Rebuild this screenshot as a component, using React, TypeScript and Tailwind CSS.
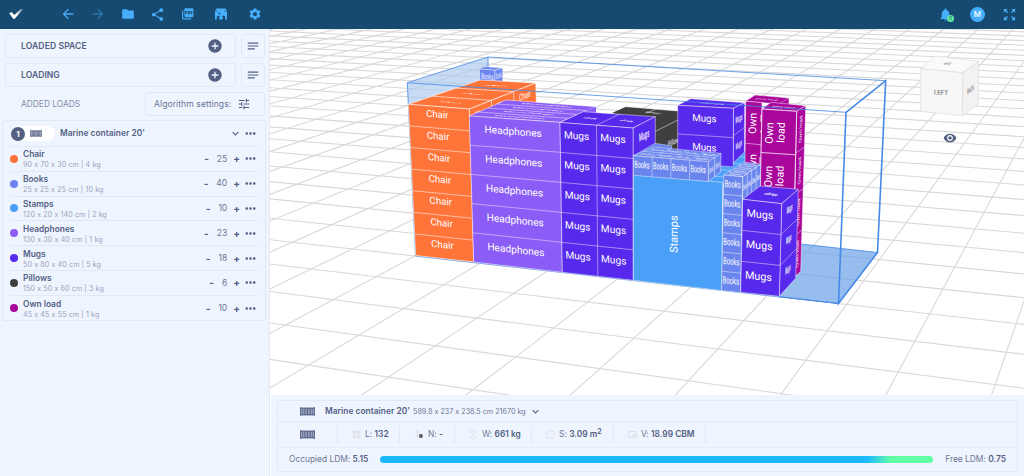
import React from "react";
import {
  MdAddCircle,
  MdArrowBack,
  MdArrowForward,
  MdExpandMore,
  MdFolder,
  MdMoreHoriz,
  MdNotes,
  MdNotifications,
  MdPictureAsPdf,
  MdSettings,
  MdShare,
  MdTune,
  MdVisibility,
  MdZoomOutMap,
} from "react-icons/md";

type Pt = [number, number];
type Quad = [Pt, Pt, Pt, Pt];

const loads = [
  { name: "Chair", dims: "90 x 70 x 30 cm | 4 kg", qty: 25, dot: "bg-[#ff7439]" },
  { name: "Books", dims: "25 x 25 x 25 cm | 10 kg", qty: 40, dot: "bg-[#6a85ee]" },
  { name: "Stamps", dims: "120 x 20 x 140 cm | 2 kg", qty: 10, dot: "bg-[#4a9ff8]" },
  { name: "Headphones", dims: "130 x 30 x 40 cm | 1 kg", qty: 23, dot: "bg-[#8b5df6]" },
  { name: "Mugs", dims: "50 x 80 x 40 cm | 5 kg", qty: 18, dot: "bg-[#5629ec]" },
  { name: "Pillows", dims: "150 x 50 x 60 cm | 3 kg", qty: 6, dot: "bg-[#3f3f3f]" },
  { name: "Own load", dims: "45 x 45 x 55 cm | 1 kg", qty: 10, dot: "bg-[#a9069c]" },
];

const lerp = (a: Pt, b: Pt, t: number): Pt => [a[0] + (b[0] - a[0]) * t, a[1] + (b[1] - a[1]) * t];

/** Point inside a quad (tl, tr, br, bl) at fractions u (across) and v (down). */
const at = (q: Quad, u: number, v: number): Pt => lerp(lerp(q[0], q[1], u), lerp(q[3], q[2], u), v);

const unit = (a: Pt, b: Pt): Pt => {
  const l = Math.hypot(b[0] - a[0], b[1] - a[1]) || 1;
  return [(b[0] - a[0]) / l, (b[1] - a[1]) / l];
};

const pts = (p: Pt[]) => p.map((c) => c.join(",")).join(" ");

type FaceProps = {
  q: Quad;
  fill: string;
  rows?: number;
  cols?: number;
  label?: string;
  fs?: number;
  sx?: number;
  sy?: number;
  turn?: number;
  cu?: number;
  cv?: number;
  line?: number;
  textOpacity?: number;
  weight?: number;
};

function Face({ q, fill, rows = 1, cols = 1, label, fs = 10, sx = 1, sy = 1, turn = 0, cu = 0.5, cv = 0.5, line = 0.6, textOpacity = 1, weight = 400 }: FaceProps) {
  const marks: React.ReactNode[] = [];
  for (let r = 1; r < rows; r++) {
    const a = at(q, 0, r / rows);
    const b = at(q, 1, r / rows);
    marks.push(<line key={`r${r}`} x1={a[0]} y1={a[1]} x2={b[0]} y2={b[1]} />);
  }
  for (let c = 1; c < cols; c++) {
    const a = at(q, c / cols, 0);
    const b = at(q, c / cols, 1);
    marks.push(<line key={`c${c}`} x1={a[0]} y1={a[1]} x2={b[0]} y2={b[1]} />);
  }
  const texts: React.ReactNode[] = [];
  if (label) {
    for (let r = 0; r < rows; r++) {
      for (let c = 0; c < cols; c++) {
        const v = (r + cv) / rows;
        const u = (c + cu) / cols;
        const p = at(q, u, v);
        const ux = unit(at(q, 0, v), at(q, 1, v));
        const vy = unit(at(q, u, 0), at(q, u, 1));
        texts.push(
          <text
            key={`${r}-${c}`}
            transform={`matrix(${ux[0] * sx} ${ux[1] * sx} ${vy[0] * sy} ${vy[1] * sy} ${p[0]} ${p[1]}) rotate(${turn})`}
            fontSize={fs}
            fontWeight={weight}
            y={fs * 0.34}
            textAnchor="middle"
            fill="#fff"
            opacity={textOpacity}
          >
            {label}
          </text>,
        );
      }
    }
  }
  return (
    <g>
      <polygon points={pts(q)} fill={fill} stroke="#fff" strokeOpacity={0.75} strokeWidth={line} strokeLinejoin="round" />
      <g stroke="#fff" strokeOpacity={0.75} strokeWidth={line}>{marks}</g>
      {texts}
    </g>
  );
}

/** Floor projection; one unit is a metre, the origin is the container's near left corner. */
const floor = (X: number, Z: number): Pt => {
  const w = 1 - 0.019 * X + 0.0483 * Z;
  return [(415 + 55.85 * X + 57 * Z) / w, (256 + 2.29 * X - 7.34 * Z) / w];
};

function FloorGrid() {
  const lines: React.ReactNode[] = [];
  for (let X = -40; X <= 20; X++) {
    const a = floor(X, -8);
    const b = floor(X, 60);
    lines.push(<line key={`x${X}`} x1={a[0]} y1={a[1]} x2={b[0]} y2={b[1]} />);
  }
  for (let Z = -8; Z <= 60; Z++) {
    const a = floor(-40, Z);
    const b = floor(20, Z);
    lines.push(<line key={`z${Z}`} x1={a[0]} y1={a[1]} x2={b[0]} y2={b[1]} />);
  }
  return <g stroke="#d8d8d8" strokeWidth={1.1}>{lines}</g>;
}

const CHAIR = "#ff7439";
const BOOK = "#6a85ee";
const STAMP = "#4a9ff8";
const HEAD = "#8b5df6";
const MUG = "#5629ec";
const OWN = "#a9069c";
const EDGE = "#4688e6";

function Scene() {
  return (
    <svg className="block h-[366px] w-[754px]" viewBox="270 29 754 366" fontFamily="Roboto, sans-serif">
      <FloorGrid />
      <polygon points="720,235.5 800.7,244 877.5,252.5 838.5,303.5 740,292" fill="#6ea3e8" fillOpacity={0.72} />
      <polygon points="407.3,82.7 488,57 489,90 408.5,106" fill="#a9c7f0" fillOpacity={0.65} />
      <g stroke={EDGE} strokeWidth={1} fill="none" strokeOpacity={0.8}>
        <path d="M407.3 82.7L488 57L885.7 80.7M488 57V84" />
        <path d="M800.7 244L877.5 252.5M407.3 82.7L415.5 256M415.5 256L838.5 303.5" />
      </g>

      <Face q={[[485, 66.7], [502.7, 68], [495, 70.3], [479.3, 69]]} fill={BOOK} line={0.4} />
      <Face q={[[479.3, 69], [495, 70.3], [495, 86], [480, 84]]} fill={BOOK} label="Books" fs={8} sx={0.55} cv={0.45} />
      <Face q={[[495, 70.3], [502.7, 68], [502.7, 84], [495, 86]]} fill={BOOK} label="Books" fs={8} sx={0.26} cv={0.4} />

      <Face q={[[480, 80], [535.7, 83], [469.3, 109], [408.3, 104.3]]} fill={CHAIR} rows={3} label="Chair" fs={9} sy={0.32} sx={1} turn={180} line={0.8} />
      <Face q={[[469.3, 109], [535.7, 83], [536.5, 106], [470, 133]]} fill={CHAIR} cols={3} label="Chair" fs={9} sx={0.6} line={0.8} cv={0.36} />
      <Face q={[[408.3, 104.3], [469.3, 109], [473.7, 262], [415.7, 255.5]]} fill={CHAIR} rows={7} label="Chair" fs={9.7} cu={0.47} cv={0.36} line={0.7} />

      <Face q={[[506, 100], [596, 106.7], [560, 122.3], [469.3, 116]]} fill={HEAD} rows={4} label="Headphones" fs={9} sy={0.34} turn={180} />
      <polygon points="596,106.7 596,114 583,112" fill={HEAD} />
      <Face q={[[469.3, 116], [560, 122.3], [562.3, 272.3], [473.7, 262]]} fill={HEAD} rows={5} label="Headphones" fs={10.2} cu={0.48} cv={0.42} />

      <polygon points="612,113 626,106.7 678,111 678,160 640,160 640,120" fill="#3f3f3f" />
      <path d="M655 131.5L678 120M646.5 113L656 109.2M626 106.7L678 111" stroke="#fff" strokeOpacity={0.7} strokeWidth={0.7} fill="none" />
      <text transform="matrix(.5 -.22 0 1 668 147)" fontSize={8} fill="#fff">Pillows</text>
      <text transform="matrix(-.6 -.06 .5 -.25 662 113)" fontSize={8} fill="#fff">Pillows</text>

      <Face q={[[755, 95], [788.7, 98], [779, 104], [745.7, 101.3]]} fill={OWN} label="Own load" fs={6} sy={0.45} sx={0.9} turn={180} />
      <polygon points="779,104 788.7,98 788.7,125 779,125" fill={OWN} />
      <Face q={[[771, 102.3], [805.7, 105.7], [796.7, 111.3], [762, 109]]} fill={OWN} label="Own load" fs={6} sy={0.45} sx={0.9} turn={180} />
      <Face q={[[796.7, 111.3], [805.7, 105.7], [800.7, 271.5], [793, 278]]} fill={OWN} rows={4} label="Own load" fs={6.5} sx={0.7} turn={-90} />

      <Face q={[[725, 149], [760, 151], [724, 184], [640, 178]]} fill={STAMP} rows={5} line={0.5} />
      <Face q={[[745.7, 101.3], [762, 102.6], [761, 165], [745, 163]]} fill={OWN} line={0.6} />
      <path d="M745.4 143.2L761 144.8" stroke="#fff" strokeOpacity={0.8} strokeWidth={0.6} />
      <text transform="translate(756.4 123.5) rotate(-88)" fontSize={10.6} textAnchor="middle" fill="#fff">Own</text>
      <text transform="translate(756 168) rotate(-88)" fontSize={10.6} textAnchor="start" fill="#fff">wn</text>
      <path d="M761 115v7M761 130v3M760 157v6" stroke="#fff" strokeWidth={0.9} />
      <Face q={[[762, 109], [796.7, 111.3], [794.5, 198.3], [760, 196]]} fill={OWN} rows={2} label="Own" fs={10.8} turn={-90} cu={0.23} cv={0.54} />
      <Face q={[[762, 109], [796.7, 111.3], [794.5, 198.3], [760, 196]]} fill="none" rows={2} label="load" fs={10.8} turn={-90} cu={0.56} cv={0.51} />

      <Face q={[[690.7, 98.7], [744.7, 102.7], [733.3, 108.3], [677.7, 105.3]]} fill={MUG} label="Mugs" fs={9} sy={0.35} sx={1.1} turn={180} />
      <Face q={[[733.3, 108.3], [744.7, 102.7], [744.5, 152], [733.3, 163]]} fill={MUG} rows={2} label="Mugs" fs={9} sx={0.36} weight={500} />
      <Face q={[[677.7, 105.3], [733.3, 108.3], [733.3, 167], [677.7, 162.5]]} fill={MUG} rows={2} label="Mugs" fs={9.8} cu={0.48} cv={0.4} />

      <Face q={[[583.3, 111.7], [655.3, 116.7], [633, 128], [560, 122.5]]} fill={MUG} cols={2} label="Mugs" fs={9} sy={0.45} sx={0.6} turn={180} weight={500} />
      <Face q={[[633, 128], [655.3, 116.7], [655.3, 146], [633, 159]]} fill={MUG} label="Mugs" fs={11} sx={0.42} cv={0.43} weight={500} />
      <Face q={[[560, 122.5], [633, 128], [633.3, 280.3], [562.3, 272.3]]} fill={MUG} rows={5} cols={2} label="Mugs" fs={10.2} cu={0.45} cv={0.4} />

      <polygon points={pts([[633.3, 155.7], [655, 143.3], [671.7, 145.7], [671.7, 152], [650, 157]])} fill={BOOK} stroke="#fff" strokeOpacity={0.7} strokeWidth={0.5} />
      <Face q={[[654, 147], [721, 153.3], [708.3, 161.7], [633.3, 155.7]]} fill={BOOK} rows={2} cols={4} label="Books" fs={8} sx={0.6} sy={0.6} line={0.5} />
      <Face q={[[708.3, 161.7], [721, 153.3], [720.7, 172], [708.3, 181.5]]} fill={BOOK} cols={2} label="Books" fs={8} sx={0.24} line={0.6} />

      <Face q={[[633.3, 174], [722.8, 182.5], [721.7, 290.5], [633.3, 280.3]]} fill={STAMP} label="Stamps" fs={11} turn={-90} cu={0.455} cv={0.525} />
      <Face q={[[633.3, 155.7], [708.3, 161.7], [708.3, 181.5], [633.3, 175.3]]} fill={BOOK} cols={4} label="Books" fs={9.6} sx={0.58} cu={0.46} cv={0.43} />

      <Face q={[[744, 162.3], [760.7, 164], [742.7, 176.7], [723.7, 175]]} fill={BOOK} rows={4} label="Books" fs={6} sy={0.6} sx={0.8} line={0.6} />
      <Face q={[[742.7, 176.7], [760.7, 164], [760.5, 187], [742.7, 199.5]]} fill={BOOK} cols={4} label="Books" fs={8} sx={0.18} line={0.6} weight={500} />
      <Face q={[[723.7, 175], [742.7, 176.7], [740.5, 292.5], [721.5, 290.5]]} fill={BOOK} rows={6} label="Books" fs={9.8} sx={0.6} cv={0.44} cu={0.48} />

      <Face q={[[760, 186], [798.3, 189.3], [781.7, 203.7], [742.7, 199.3]]} fill={MUG} label="Mugs" fs={9} sy={0.5} sx={0.6} turn={180} weight={500} />
      <Face q={[[781.7, 203.7], [798.3, 189.3], [795.7, 278.3], [779.3, 296.3]]} fill={MUG} rows={3} label="Mugs" fs={10} sx={0.3} cv={0.4} weight={700} />
      <Face q={[[742.7, 199.3], [781.7, 203.7], [779.3, 296.3], [740.7, 292.3]]} fill={MUG} rows={3} label="Mugs" fs={10.8} cu={0.45} cv={0.42} />

      <g stroke={EDGE} fill="none">
        <path d="M407.3 82.7L846 112.3" strokeWidth={1} strokeOpacity={0.8} />
        <path d="M846 112.3L885.7 80.7L877.5 252.5L838.5 303.5Z" strokeWidth={1.6} />
        <path d="M779.3 296.7L838.5 303.5" strokeWidth={1} />
      </g>

      <g stroke="#dcdcdc" strokeWidth={0.7} strokeLinejoin="round">
        <polygon points="920.7,68.7 935,56 978.7,61.3 962.7,72.7" fill="#fafafa" />
        <polygon points="962.7,72.7 978.7,61.3 978.3,104 962.3,115.7" fill="#f2f2f2" />
        <polygon points="920.7,68.7 962.7,72.7 962.3,115.7 920.7,111.3" fill="#f7f7f7" />
      </g>
      <g fill="#777" textAnchor="middle" fontWeight={500}>
        <text transform="matrix(.98 .08 0 1 941 94.8)" fontSize={6.4}>LEFT</text>
        <text transform="matrix(.36 -.25 0 1 970.5 92)" fontSize={7}>BACK</text>
        <text transform="matrix(-.6 -.06 .6 -.45 949 62.5)" fontSize={6}>TOP</text>
      </g>
    </svg>
  );
}

function Check() {
  return (
    <svg className="h-4 w-4" viewBox="0 0 16 16" fill="none">
      <defs>
        <linearGradient id="tick" x1="6" y1="12" x2="15" y2="3" gradientUnits="userSpaceOnUse">
          <stop offset="0.35" stopColor="#fff" />
          <stop offset="1" stopColor="#fff" stopOpacity="0.25" />
        </linearGradient>
      </defs>
      <path d="M1.2 7.2L3.6 6.1L6.3 8.9L12.6 2.9L15.2 3L7 12.5Q5.9 13.6 5 12.6Z" fill="url(#tick)" />
    </svg>
  );
}

function Gallery() {
  return (
    <svg className="h-3 w-3" viewBox="0 0 12 12">
      <path d="M1.4 0.4H10.6L12 3V11.4H10.2V8.6L8.6 7.4L6 9L3.4 7.4L1.8 8.6V11.4H0V3Z" fill="#46aefb" />
      <path d="M0.2 3H3M9 3H11.8" stroke="#174a70" strokeWidth="0.6" fill="none" />
      <circle cx="4.4" cy="5.4" r="0.9" fill="#174a70" />
      <circle cx="6" cy="9.8" r="1.9" fill="#46aefb" />
    </svg>
  );
}

function ContainerIcon({ className }: { className: string }) {
  return (
    <svg className={className} viewBox="0 0 15 9" fill="none" stroke="#535f83">
      <path d="M1 1H14V8H1Z" fill="#535f83" fillOpacity="0.35" stroke="none" />
      <path d="M0.7 0.2V8.8M14.3 0.2V8.8" strokeWidth="1.2" />
      <path d="M0.5 1.1H14.5M0.5 7.9H14.5" strokeWidth="1" />
      <path d="M2.7 1V8M4.3 1V8M5.9 1V8M7.5 1V8M9.1 1V8M10.7 1V8M12.3 1V8" strokeWidth="0.9" />
    </svg>
  );
}

function Cell({ className, children }: { className: string; children: React.ReactNode }) {
  return <div className={`flex h-full shrink-0 items-center justify-center ${className}`}>{children}</div>;
}

function Header() {
  return (
    <header className="flex h-[29px] shrink-0 items-center bg-[#174a70] pb-px text-[#46aefb]">
      <div className="flex h-full w-[52px] items-center pl-2"><Check /></div>
      <Cell className="w-[31px]"><MdArrowBack size={16} /></Cell>
      <Cell className="w-[29px] opacity-45"><MdArrowForward size={16} /></Cell>
      <Cell className="w-[31px]"><MdFolder size={14} /></Cell>
      <Cell className="w-[29px]"><MdShare size={15} /></Cell>
      <Cell className="w-[31px]"><MdPictureAsPdf size={13.5} /></Cell>
      <Cell className="w-[36px]"><Gallery /></Cell>
      <Cell className="w-[31px]"><MdSettings size={14} /></Cell>
      <div className="ml-auto flex h-full items-center">
        <div className="relative mr-[17px] flex">
          <MdNotifications size={15} />
          <span className="absolute bottom-0 -right-[1px] flex h-[7px] w-[7px] items-center justify-center rounded-full bg-[#62eba5] text-[5px] leading-none text-[#174a70]">0</span>
        </div>
        <span className="mr-[17px] flex h-[15px] w-[15px] items-center justify-center rounded-full bg-[#46aefb] text-[8px] font-medium text-white">M</span>
        <MdZoomOutMap size={15} className="mr-[7px]" />
      </div>
    </header>
  );
}

function SectionRow({ title, className }: { title: string; className: string }) {
  return (
    <div className="flex gap-[5px]">
      <div className="flex h-[24px] w-[231px] items-center justify-between rounded-[3px] border border-[#e1e9f5] pr-[12px] pl-[15px]">
        <span className={`text-[8.6px] font-semibold text-[#535f83] ${className}`}>{title}</span>
        <MdAddCircle size={16} />
      </div>
      <div className="flex h-[24px] w-[24px] items-center justify-center rounded-[3px] border border-[#e1e9f5]">
        <MdNotes size={14} />
      </div>
    </div>
  );
}

function Sidebar() {
  return (
    <aside className="flex w-[269px] shrink-0 flex-col bg-[#eff5ff] pt-[5px] text-[#535f83]">
      <div className="flex flex-col gap-[5px] pl-[5px]">
        <SectionRow title="LOADED SPACE" className="tracking-[0.08px]" />
        <SectionRow title="LOADING" className="tracking-[0.02px]" />
        <div className="flex items-center justify-between pr-[4px] pl-[16px]">
          <span className="text-[8.4px] text-[#7f8aa6]">ADDED LOADS</span>
          <div className="flex h-[24px] w-[120px] items-center justify-between rounded-[3px] border border-[#e1e9f5] pr-[13px] pl-[8px]">
            <span className="text-[8.6px] tracking-[0.06px] whitespace-nowrap text-[#6b7694]">Algorithm settings:</span>
            <MdTune size={14} />
          </div>
        </div>
      </div>

      <div className="mt-[4px] ml-[2px] flex h-[201px] w-[264px] flex-col rounded-[3px] border border-[#e1e9f5] px-[7px]">
        <div className="flex h-[26px] shrink-0 items-center border-b border-[#e1e9f5]">
          <div className="ml-px flex h-[15px] w-[44px] items-center rounded-full bg-white">
            <span className="flex h-[14px] w-[14px] items-center justify-center rounded-full bg-[#535f83] text-[8px] font-bold text-white">1</span>
            <ContainerIcon className="ml-[5px] h-[7px] w-[12px]" />
          </div>
          <span className="ml-[5px] text-[8.4px] font-semibold tracking-[0.03px]">Marine container 20'</span>
          <MdExpandMore size={13} className="ml-auto" />
          <MdMoreHoriz size={15} className="ml-[1px]" />
        </div>
        {loads.map((l) => (
          <div key={l.name} className="flex h-[24.8px] shrink-0 items-center border-b border-[#e1e9f5] last:border-b-0">
            <span className={`h-[8px] w-[8px] rounded-full ${l.dot}`} />
            <div className="ml-[5px] flex flex-col pt-[2px]">
              <span className="text-[8.4px] leading-[11px] font-semibold">{l.name}</span>
              <span className="text-[7.1px] leading-[10px] tracking-[0.12px] text-[#98a2bb]">{l.dims}</span>
            </div>
            <div className="ml-auto flex items-center text-[8.5px] text-[#6b7694]">
              <span className="text-[10px] font-bold text-[#535f83]">-</span>
              <span className="ml-[8px]">{l.qty}</span>
              <span className="ml-[6px] text-[10px] font-bold text-[#535f83]">+</span>
            </div>
            <MdMoreHoriz size={15} className="ml-[3px]" />
          </div>
        ))}
      </div>
    </aside>
  );
}

function Stat({ className, icon, label, value }: { className: string; icon: React.ReactNode; label: string; value: React.ReactNode }) {
  return (
    <div className={`flex h-[19px] items-center border-r border-[#e1e9f5] ${className}`}>
      <svg className="mr-[4px] h-[9px] w-[9px]" viewBox="0 0 9 9" fill="none" stroke="#dfe2e8">{icon}</svg>
      <span className="whitespace-nowrap text-[#6b7694]">
        {label}: <b className="font-semibold text-[#535f83]">{value}</b>
      </span>
    </div>
  );
}

function Summary() {
  return (
    <section className="ml-px h-[81px] bg-[#eff5ff] pt-[5px] pr-[6px] pl-[6px] text-[8.4px] text-[#535f83]">
      <div className="flex h-[72px] flex-col rounded-[3px] border border-[#e1e9f5]">
        <div className="flex h-[21px] shrink-0 items-center border-b border-[#e1e9f5] pl-[22px]">
          <ContainerIcon className="h-[9px] w-[15px]" />
          <span className="ml-[10px] text-[8.4px] font-semibold tracking-[0.03px]">Marine container 20'</span>
          <span className="mt-[2px] ml-[3px] text-[7.2px] text-[#6b7694]">589.8 x 237 x 238.5 cm 21670 kg</span>
          <MdExpandMore size={13} className="ml-[3px]" />
        </div>
        <div className="flex h-[26px] shrink-0 items-center border-b border-[#e8eef8]">
          <div className="flex h-[19px] w-[60px] items-center border-r border-[#e1e9f5] pl-[22px]">
            <ContainerIcon className="h-[9px] w-[15px]" />
          </div>
          <Stat className="w-[62px] pl-[14px]" label="L" value="132" icon={<path d="M1 1h2.6v2.6H1zM5.2 1h2.6v2.6H5.2zM1 5.2h2.6v2.6H1zM5.2 5.2h2.6v2.6H5.2z" fill="#dfe2e8" />} />
          <Stat className="w-[55px] pl-[15px]" label="N" value="-" icon={<><path d="M1 1h2v2H1zM1 5h2v2H1z" fill="#dfe2e8" /><path d="M4.2 4.2h3.4v3.6h-3.4z" fill="#555" stroke="none" /></>} />
          <Stat className="w-[77px] pl-[14px]" label="W" value="661 kg" icon={<path d="M1 1H8M1.5 1.5L4.5 4.5L7.5 1.5M1 8.2H8M1.5 8L4.5 4.5L7.5 8" />} />
          <Stat className="w-[82px] pl-[14px]" label="S" value={<>3.09 m<sup className="top-[-0.4em] text-[7px]">2</sup></>} icon={<path d="M1 1h7v7H1z" />} />
          <Stat className="w-[92px] pl-[14px]" label="V" value="18.99 CBM" icon={<><path d="M.5 1.5h8v6h-8z" /><path d="M4.5 4h3v2.6h-3z" fill="#dfe2e8" stroke="none" /></>} />
        </div>
        <div className="flex flex-1 items-center pr-[11px] pl-[11px] text-[#6b7694]">
          <span className="w-[91px] whitespace-nowrap">Occupied LDM: <b className="font-semibold text-[#535f83]">5.15</b></span>
          <div className="h-[7px] w-[553px] rounded-full bg-[linear-gradient(90deg,#1cb8ff_0%,#1cb8ff_88%,#62ffa5_92.5%,#62ffa5_100%)]" />
          <span className="ml-auto whitespace-nowrap">Free LDM: <b className="font-semibold text-[#535f83]">0.75</b></span>
        </div>
      </div>
    </section>
  );
}

export default function App() {
  return (
    <div className="flex h-[476px] w-[1024px] flex-col overflow-hidden bg-white font-['Inter','Open_Sans',sans-serif] [font-feature-settings:'calt'_0]">
      <Header />
      <div className="flex min-h-0 flex-1">
        <Sidebar />
        <main className="flex w-[755px] flex-col border-l border-[#e1e9f5] bg-white">
          <div className="relative h-[366px] shrink-0">
            <Scene />
            <MdVisibility size={14} className="absolute top-[102px] left-[673px] text-[#535f83]" />
          </div>
          <Summary />
        </main>
      </div>
    </div>
  );
}
